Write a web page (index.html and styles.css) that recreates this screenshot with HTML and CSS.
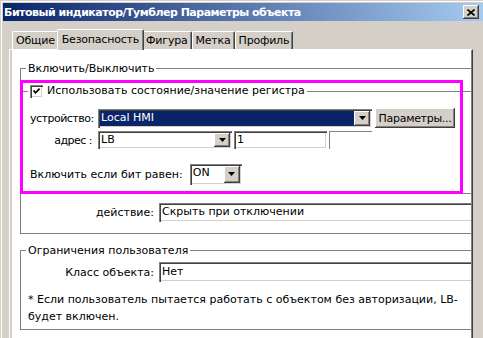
FILE: index.html
```html
<!DOCTYPE html>
<html lang="ru">
<head>
    <meta charset="UTF-8">
    <title>Битовый индикатор/Тумблер Параметры объекта</title>
    <link rel="stylesheet" href="styles.css">
</head>
<body>

<div class="window">
    <div class="titlebar">
        <span class="title">Битовый индикатор/Тумблер Параметры объекта</span>
        <span class="close">
            <svg width="8" height="7" viewBox="0 0 8 7"><path d="M0.5 0.5 L7.5 6.5 M7.5 0.5 L0.5 6.5" stroke="#000" stroke-width="1.6"/></svg>
        </span>
    </div>

    <div class="dialog">
        <div class="tabs">
            <div class="tab">Общие</div>
            <div class="tab active">Безопасность</div>
            <div class="tab">Фигура</div>
            <div class="tab">Метка</div>
            <div class="tab">Профиль</div>
        </div>

        <div class="panel">
            <div class="page">
                <fieldset class="group group-main">
                    <legend>Включить/Выключить</legend>

                    <fieldset class="group group-reg">
                        <legend>
                            <span class="check">
                                <svg width="13" height="13" viewBox="0 0 13 13"><path d="M3.5 5.5 L5.5 7.8 L9.6 3.6" fill="none" stroke="#000" stroke-width="1.7"/></svg>
                            </span>
                            Использовать состояние/значение регистра
                        </legend>

                        <div class="row row-dev">
                            <span class="lbl-short">устройство:</span>
                            <div class="combo combo-dev selected">
                                <span class="value">Local HMI</span>
                                <span class="arrow"><svg width="7" height="4" viewBox="0 0 7 4"><polygon points="0,0 7,0 3.5,4" fill="#000"/></svg></span>
                            </div>
                            <div class="button">Параметры...</div>
                        </div>

                        <div class="row row-addr">
                            <span class="lbl-short">адрес :</span>
                            <div class="combo combo-addr">
                                <span class="value">LB</span>
                                <span class="arrow"><svg width="7" height="4" viewBox="0 0 7 4"><polygon points="0,0 7,0 3.5,4" fill="#000"/></svg></span>
                            </div>
                            <div class="field field-num">1</div>
                            <div class="field-flat"></div>
                        </div>

                        <div class="row row-bit">
                            <span>Включить если бит равен:</span>
                            <div class="combo combo-bit">
                                <span class="value">ON</span>
                                <span class="arrow"><svg width="7" height="4" viewBox="0 0 7 4"><polygon points="0,0 7,0 3.5,4" fill="#000"/></svg></span>
                            </div>
                        </div>
                    </fieldset>

                    <div class="row row-wide">
                        <span class="lbl-long">действие:</span>
                        <div class="field field-wide">Скрыть при отключении</div>
                    </div>
                </fieldset>

                <fieldset class="group group-user">
                    <legend>Ограничения пользователя</legend>
                    <div class="row row-wide row-class">
                        <span class="lbl-long">Класс объекта:</span>
                        <div class="field field-wide">Нет</div>
                    </div>
                    <p class="note">* Если пользователь пытается работать с объектом без авторизации, LB-<br>будет включен.</p>
                </fieldset>

                <div class="highlight"></div>
            </div>
        </div>
    </div>
</div>

</body>
</html>
```

FILE: styles.css
```css
* {
    box-sizing: border-box;
}
body {
    margin: 0;
    width: 483px;
    height: 338px;
    overflow: hidden;
    background: #d4d0c8;
    font-family: "DejaVu Sans", Tahoma, sans-serif;
    font-size: 11px;
    color: #000;
}
.window {
    height: 338px;
    padding: 3px 0 0 3px;
    box-shadow: inset 1px 1px 0 #d4d0c8, inset 2px 2px 0 #fff;
    display: flex;
    flex-direction: column;
}
.titlebar {
    height: 18px;
    flex: none;
    display: flex;
    align-items: center;
    padding: 0 4px 0 1px;
    background: linear-gradient(to right, #0a246a, #a6caf0);
    color: #fff;
    font-weight: bold;
    letter-spacing: -0.5px;
    white-space: nowrap;
}
.title {
    flex: 1;
}
.close {
    width: 16px;
    height: 14px;
    background: #d4d0c8;
    box-shadow: inset -1px -1px #404040, inset 1px 1px #fff, inset -2px -2px #808080;
    display: flex;
    align-items: center;
    justify-content: center;
}
.close svg {
    display: block;
}
.dialog {
    flex: 1;
    min-height: 0;
    padding: 8px 10px 0 6px;
    display: flex;
    flex-direction: column;
}
.tabs {
    height: 20px;
    flex: none;
    display: flex;
    align-items: flex-end;
    padding-left: 3px;
}
.tab {
    height: 18px;
    padding: 0 3px;
    display: flex;
    align-items: center;
    border-top: 1px solid #fff;
    border-left: 1px solid #fff;
    border-right: 1px solid #404040;
    border-radius: 2px 2px 0 0;
    box-shadow: inset -1px 0 #808080;
    letter-spacing: -0.2px;
    white-space: nowrap;
}
.tab.active {
    height: 21px;
    margin: 0 -2px -1px;
    padding: 0 4px 1px;
    background: #d4d0c8;
    position: relative;
    z-index: 1;
}
.panel {
    flex: 1;
    min-height: 0;
    display: flex;
    border-top: 1px solid #fff;
    border-left: 1px solid #fff;
    border-right: 1px solid #404040;
    padding: 0 1px 0 2px;
    box-shadow: inset -1px 0 #808080;
}
.page {
    flex: 1;
    position: relative;
    overflow: hidden;
    background: #fff;
    padding-top: 12px;
}
.group {
    border: 1px solid #808080;
    margin: 0;
    padding: 0;
    min-width: 0;
}
.group legend {
    padding: 0 2px;
    margin-left: 5px;
    line-height: 13px;
    white-space: nowrap;
}
.group-main {
    margin: 0 -20px 0 8px;
    padding-bottom: 11px;
}
.group-reg {
    margin-top: 9px;
    padding: 10px 0 8px;
}
.group-reg legend {
    display: flex;
    align-items: center;
    gap: 4px;
    margin-left: 6px;
    line-height: 14px;
}
.group-reg .row {
    margin-left: 8px;
}
.check {
    width: 13px;
    height: 13px;
    background: #fff;
    box-shadow: inset 1px 1px #808080, inset 2px 2px #404040, inset -1px -1px #fff, inset -2px -2px #d4d0c8;
}
.check svg {
    display: block;
}
.row {
    display: flex;
    align-items: center;
    white-space: nowrap;
}
.row-dev {
    height: 20px;
}
.group-reg .row-addr {
    height: 18px;
    margin-top: 3px;
}
.group-reg .row-bit {
    height: 22px;
    margin-top: 14px;
}
.lbl-short {
    width: 62px;
    margin-right: 6px;
    text-align: right;
    letter-spacing: -0.5px;
}
.lbl-long {
    width: 133px;
    margin-right: 5px;
    text-align: right;
}
.combo {
    display: flex;
    height: 18px;
    padding: 2px;
    background: #fff;
    box-shadow: inset 1px 1px #808080, inset 2px 2px #404040, inset -1px -1px #fff, inset -2px -2px #d4d0c8;
}
.combo .value {
    flex: 1;
    padding-left: 1px;
    line-height: 14px;
}
.combo.selected .value {
    background: #0a246a;
    color: #fff;
}
.arrow {
    width: 16px;
    background: #d4d0c8;
    box-shadow: inset -1px -1px #404040, inset 1px 1px #fff, inset -2px -2px #808080;
    display: flex;
    align-items: center;
    justify-content: center;
}
.arrow svg {
    display: block;
}
.combo-dev {
    width: 274px;
    height: 19px;
}
.combo-addr {
    width: 134px;
}
.combo-bit {
    width: 52px;
    height: 21px;
    margin-left: 7px;
}
.button {
    width: 80px;
    height: 20px;
    margin-left: 3px;
    display: flex;
    align-items: center;
    justify-content: center;
    background: #d4d0c8;
    box-shadow: inset -1px -1px #404040, inset 1px 1px #fff, inset -2px -2px #808080;
    letter-spacing: -0.3px;
}
.field {
    height: 18px;
    padding: 2px 3px;
    line-height: 14px;
    background: #fff;
    box-shadow: inset 1px 1px #808080, inset 2px 2px #404040, inset -1px -1px #fff, inset -2px -2px #d4d0c8;
}
.field-num {
    width: 93px;
    margin-left: 2px;
}
.field-flat {
    width: 43px;
    height: 18px;
    margin-left: 2px;
    border-top: 1px solid #808080;
    border-left: 1px solid #808080;
}
.row-wide {
    height: 19px;
    margin-top: 9px;
}
.field-wide {
    flex: 1;
    height: 19px;
}
.group-user {
    margin: 10px -20px 0 8px;
    padding: 0 0 4px;
}
.row-class {
    height: 20px;
    margin-top: 5px;
}
.row-class .field-wide {
    height: 20px;
    padding-top: 3px;
}
.note {
    margin: 9px 0 0 7px;
    line-height: 17px;
}
.highlight {
    position: absolute;
    left: 8px;
    top: 30px;
    width: 443px;
    height: 114px;
    border: 3px solid #f0f;
}
```
